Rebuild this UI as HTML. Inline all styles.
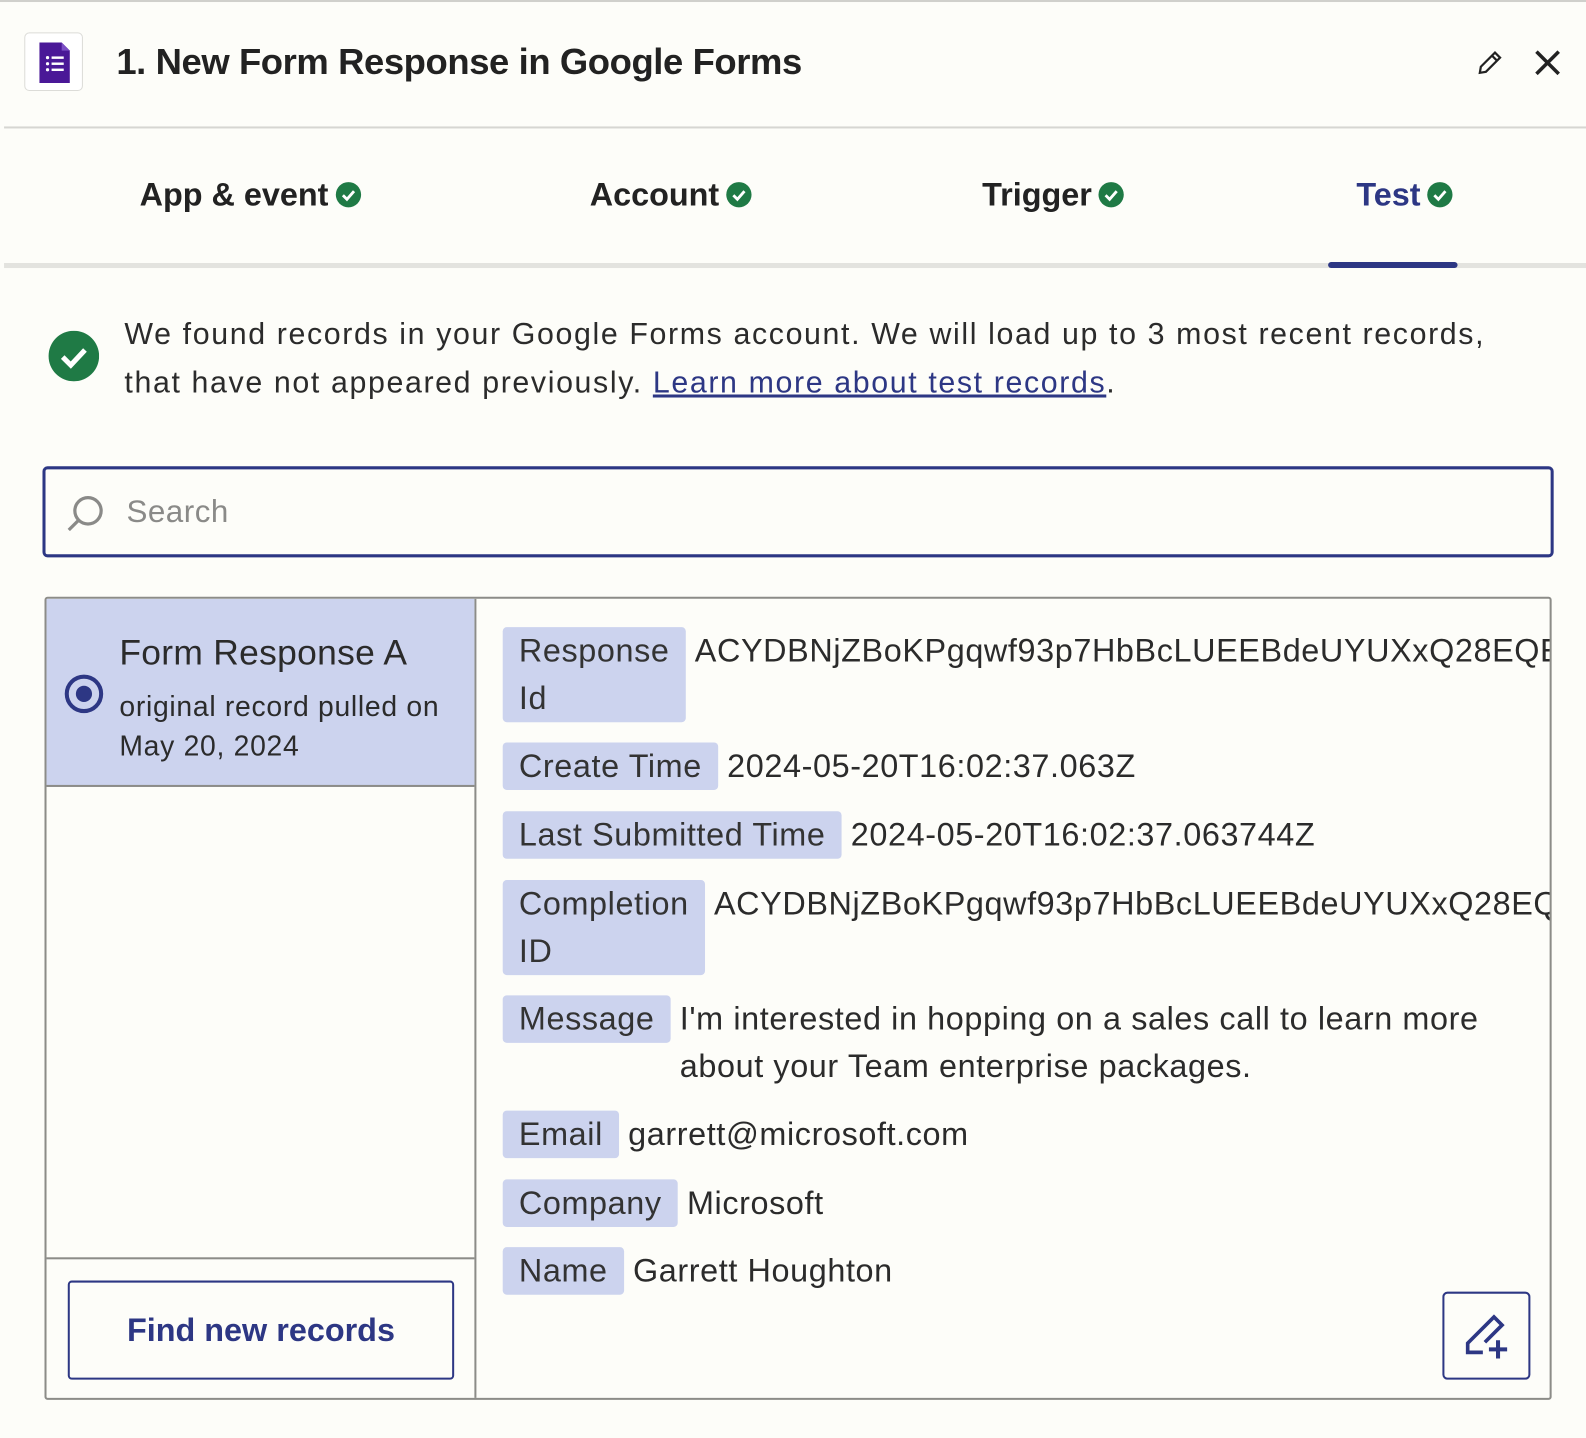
<!DOCTYPE html>
<html><head><meta charset="utf-8"><style>
*{box-sizing:border-box;margin:0;padding:0}
body{width:1586px;height:1438px;background:#fdfdf9;font-family:"Liberation Sans",sans-serif;color:#2b2b2b;overflow:hidden}
#w{position:relative;width:1568px;height:1422px;transform:scale(1.0115);transform-origin:0 0}
.abs{position:absolute}
.topline{left:0;top:0;width:1568px;height:2px;background:#d0d0cc}
.iconbox{left:24px;top:32px;width:58px;height:58px;border:1px solid #dcdcd8;border-radius:5px;background:#fff}
.title{left:115px;top:40px;font-size:36px;font-weight:bold;color:#222;white-space:nowrap;letter-spacing:-0.4px}
.sep{left:4px;top:125px;width:1564px;height:2px;background:#d6d6d2}
.tab{top:174px;font-size:32px;font-weight:bold;color:#222;white-space:nowrap;display:flex;align-items:center;gap:7px}
.chk{width:25px;height:25px;border-radius:50%;background:#1f7a45;display:inline-block;position:relative}
.chk svg{position:absolute;left:0;top:0}
.tabline{left:4px;top:260px;width:1564px;height:5px;background:#e3e3df}
.active{left:1313px;top:259px;width:128px;height:6px;border-radius:3px;background:#2d3784}
.msg{left:123px;top:307px;font-size:30px;line-height:48px;color:#2b2b2b;letter-spacing:1.6px;white-space:nowrap}
.msg a{color:#2d3784;text-decoration:underline}
.search{left:42px;top:461px;width:1494px;height:90px;border:3px solid #2d3784;border-radius:5px;background:#fdfdf9}
.stext{left:125px;top:488px;font-size:31px;color:#8a8a88;letter-spacing:0.5px}
.panel{left:44px;top:590px;width:1490px;height:794px;border:2px solid #8c8c88;border-radius:3px;overflow:hidden}
.left{left:0;top:0;width:425px;height:792px;border-right:2px solid #8c8c88}
.sel{left:0;top:0;width:423px;height:186px;background:#ccd3ee;border-bottom:2px solid #8c8c88}
.radio{left:18px;top:75px;width:38px;height:38px;border:4px solid #2d3784;border-radius:50%}
.radio::after{content:"";position:absolute;left:7px;top:7px;width:16px;height:16px;border-radius:50%;background:#2d3784}
.rt{left:72px;top:34px;font-size:35px;color:#2b2b2b;white-space:nowrap;letter-spacing:0.3px}
.rs{left:72px;top:87px;font-size:28px;line-height:39px;color:#2b2b2b;white-space:nowrap;letter-spacing:0.7px}
.bline{left:0;top:651px;width:423px;height:2px;background:#8c8c88}
.btn{left:21px;top:674px;width:382px;height:98px;border:2px solid #2d3784;border-radius:4px;font-size:32px;font-weight:bold;color:#2d3784;display:flex;align-items:center;justify-content:center}
.row{position:absolute;left:451px;display:flex;align-items:flex-start;font-size:32px;line-height:47px;white-space:nowrap;letter-spacing:0.6px}
.lab{background:#ccd3ee;border-radius:4px;padding:0 16px;color:#333;margin-right:9px;flex:none}
.val{color:#2b2b2b}
.edit{left:1380px;top:685px;width:87px;height:87px;border:2px solid #2d3784;border-radius:5px}
</style></head><body><div id="w">
<div class="abs topline"></div>
<div class="abs iconbox"><svg width="58" height="58" viewBox="0 0 58 58"><path d="M14 9h22l8 8v32H14z" fill="#4a1897"/><path d="M36 9v8h8z" fill="#7b4fc4"/><g fill="#fff"><circle cx="22" cy="24" r="1.6"/><circle cx="22" cy="30" r="1.6"/><circle cx="22" cy="36" r="1.6"/><rect x="26" y="22.8" width="12" height="2.4"/><rect x="26" y="28.8" width="12" height="2.4"/><rect x="26" y="34.8" width="12" height="2.4"/></g></svg></div>
<div class="abs title">1. New Form Response in Google Forms</div>
<svg class="abs" style="left:1458px;top:47px" width="30" height="30" viewBox="0 0 30 30"><path d="M5 25l1-6 14-14 5 5-14 14z M17 8l5 5" fill="none" stroke="#222" stroke-width="2.2"/></svg>
<svg class="abs" style="left:1516px;top:48px" width="28" height="28" viewBox="0 0 28 28"><path d="M3 3l22 22M25 3L3 25" stroke="#222" stroke-width="3.5"/></svg>
<div class="abs sep"></div>
<div class="abs tab" style="left:138px">App &amp; event<span class="chk"><svg width="25" height="25"><path d="M7 13l4 4 7-8" fill="none" stroke="#fff" stroke-width="2.8"/></svg></span></div>
<div class="abs tab" style="left:583px">Account<span class="chk"><svg width="25" height="25"><path d="M7 13l4 4 7-8" fill="none" stroke="#fff" stroke-width="2.8"/></svg></span></div>
<div class="abs tab" style="left:971px">Trigger<span class="chk"><svg width="25" height="25"><path d="M7 13l4 4 7-8" fill="none" stroke="#fff" stroke-width="2.8"/></svg></span></div>
<div class="abs tab" style="left:1341px;color:#2d3784">Test<span class="chk"><svg width="25" height="25"><path d="M7 13l4 4 7-8" fill="none" stroke="#fff" stroke-width="2.8"/></svg></span></div>
<div class="abs tabline"></div>
<div class="abs active"></div>
<svg class="abs" style="left:48px;top:327px" width="50" height="50" viewBox="0 0 50 50"><circle cx="25" cy="25" r="25" fill="#1f7a45"/><path d="M14 26l8 8 14-15" fill="none" stroke="#fff" stroke-width="5"/></svg>
<div class="abs msg">We found records in your Google Forms account. We will load up to 3 most recent records,<br>that have not appeared previously. <a>Learn more about test records</a>.</div>
<div class="abs search"></div>
<svg class="abs" style="left:64px;top:487px" width="40" height="40" viewBox="0 0 40 40"><circle cx="23" cy="18" r="13" fill="none" stroke="#8a8a88" stroke-width="3.2"/><path d="M13 28l-9 9" stroke="#8a8a88" stroke-width="3.2"/></svg>
<div class="abs stext">Search</div>
<div class="abs panel">
 <div class="abs left">
  <div class="abs sel"><div class="abs radio"></div><div class="abs rt">Form Response A</div><div class="abs rs">original record pulled on<br>May 20, 2024</div></div>
  <div class="abs bline"></div>
  <div class="abs btn">Find new records</div>
 </div>
 <div class="row" style="top:28px"><span class="lab">Response<br>Id</span><span class="val">ACYDBNjZBoKPgqwf93p7HbBcLUEEBdeUYUXxQ28EQEdAbc</span></div>
 <div class="row" style="top:142px"><span class="lab">Create Time</span><span class="val">2024-05-20T16:02:37.063Z</span></div>
 <div class="row" style="top:210px"><span class="lab">Last Submitted Time</span><span class="val">2024-05-20T16:02:37.063744Z</span></div>
 <div class="row" style="top:278px"><span class="lab">Completion<br>ID</span><span class="val">ACYDBNjZBoKPgqwf93p7HbBcLUEEBdeUYUXxQ28EQEdAbc</span></div>
 <div class="row" style="top:392px"><span class="lab">Message</span><span class="val">I'm interested in hopping on a sales call to learn more<br>about your Team enterprise packages.</span></div>
 <div class="row" style="top:506px"><span class="lab">Email</span><span class="val">garrett@microsoft.com</span></div>
 <div class="row" style="top:574px"><span class="lab">Company</span><span class="val">Microsoft</span></div>
 <div class="row" style="top:641px"><span class="lab">Name</span><span class="val">Garrett Houghton</span></div>
 <div class="abs edit"><svg width="83" height="83" viewBox="0 0 83 83"><path d="M38 58H23V49L49 23L57 31L40 48" fill="none" stroke="#2d3784" stroke-width="3.6" stroke-linejoin="miter"/><path d="M53 46v18M44 55h18" stroke="#2d3784" stroke-width="4"/></svg></div>
</div>
</div></body></html>
